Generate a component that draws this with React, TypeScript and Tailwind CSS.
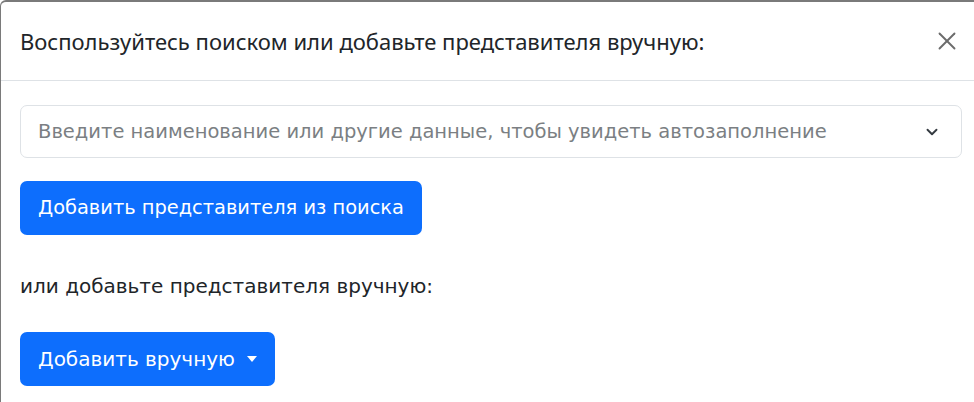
import React from 'react';
import { X, ChevronDown } from 'lucide-react';

export default function App() {
  return (
    <div className="w-[974px] h-[402px] bg-white overflow-hidden font-['Noto_Sans',sans-serif]">
      <div className="h-full border-t-2 border-l border-[#7a7a7a] rounded-tl-md flex flex-col">
        {/* Header */}
        <div className="h-[79px] flex items-center justify-between pl-[19px] pr-[12px] border-b border-[#dee2e6]">
          <h5 className="text-[22px] text-[#212529] leading-none">
            Воспользуйтесь поиском или добавьте представителя вручную:
          </h5>
          <X className="w-[30px] h-[30px] text-[#6c6c6c]" strokeWidth={1.5} />
        </div>

        {/* Body */}
        <div className="px-[19px] pt-[24px] flex flex-col items-start font-['DejaVu_Sans',sans-serif]">
          <div className="w-[942px] h-[53px] border border-[#dee2e6] rounded-[7px] flex items-center justify-between pl-[17px] pr-[20px]">
            <span className="text-[19.5px] text-[#7b7f83]">
              Введите наименование или другие данные, чтобы увидеть автозаполнение
            </span>
            <ChevronDown className="w-[18px] h-[18px] text-[#343a40]" strokeWidth={2.5} />
          </div>

          <button className="mt-[23px] h-[54px] px-[18px] bg-[#0d6efd] text-white text-[19.4px] rounded-[7px]">
            Добавить представителя из поиска
          </button>

          <p className="mt-[36px] text-[20px] text-[#212529]">или добавьте представителя вручную:</p>

          <button className="mt-[31px] h-[54px] pl-[18px] pr-[18px] bg-[#0d6efd] text-white text-[20px] rounded-[7px] flex items-center gap-[12px]">
            Добавить вручную
            <span className="w-0 h-0 border-l-[5px] border-r-[5px] border-t-[6px] border-l-transparent border-r-transparent border-t-white" />
          </button>
        </div>
      </div>
    </div>
  );
}
